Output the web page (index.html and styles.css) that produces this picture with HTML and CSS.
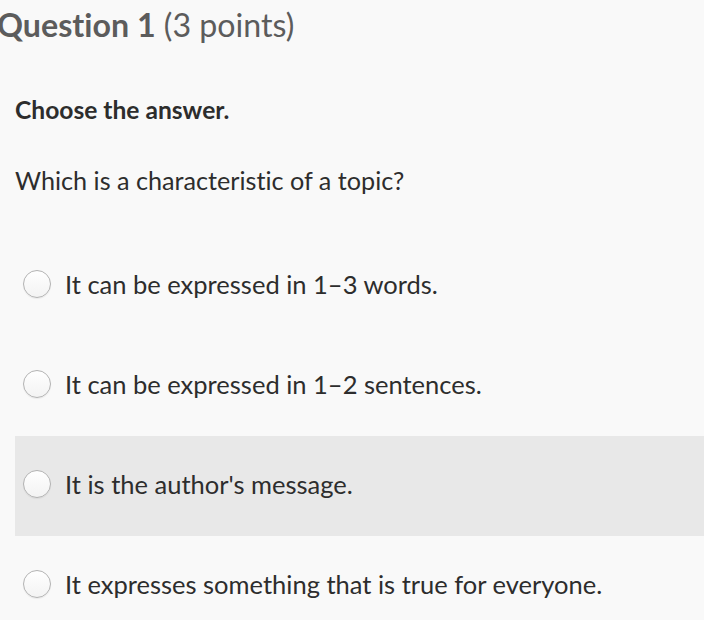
FILE: index.html
```html
<!DOCTYPE html>
<html>
<head>
<meta charset="utf-8">
<link rel="stylesheet" href="styles.css">
</head>
<body>
<div class="page">
  <h1 class="title"><span class="qnum">Question 1</span> (3 points)</h1>
  <p class="instr">Choose the answer.</p>
  <p class="prompt">Which is a characteristic of a topic?</p>
  <ul class="options">
    <li class="option"><span class="radio"></span><span class="label">It can be expressed in 1&#8211;3 words.</span></li>
    <li class="option"><span class="radio"></span><span class="label">It can be expressed in 1&#8211;2 sentences.</span></li>
    <li class="option hover"><span class="radio"></span><span class="label">It is the author's message.</span></li>
    <li class="option"><span class="radio"></span><span class="label">It expresses something that is true for everyone.</span></li>
  </ul>
</div>
</body>
</html>
```
FILE: styles.css
```css
html, body {
  margin: 0;
  padding: 0;
  background: #f9f9f9;
}
.page {
  font-family: Lato, "Open Sans", sans-serif;
  font-variant-ligatures: none;
  color: #2d2d2d;
  padding-left: 15px;
}
.title {
  margin: 0 0 0 -18px;
  padding-top: 3px;
  font-size: 32.2px;
  font-weight: normal;
  line-height: 44px;
  color: #5c5c5c;
}
.qnum {
  font-weight: bold;
}
.instr {
  margin: 48px 0 0 0;
  font-size: 24.6px;
  font-weight: bold;
  line-height: 30px;
}
.prompt {
  margin: 40px 0 0 0;
  font-size: 25.2px;
  line-height: 30px;
}
.options {
  list-style: none;
  margin: 41px 0 0 0;
  padding: 0;
}
.option {
  display: flex;
  align-items: center;
  box-sizing: border-box;
  height: 100px;
  padding: 0 0 4px 8px;
  gap: 14px;
}
.option.hover {
  background: #e8e8e8;
}
.radio {
  width: 26px;
  height: 26px;
  border-radius: 50%;
  border: 1px solid #b3b3b3;
  background: linear-gradient(#ffffff, #f3f3f3);
  box-shadow: 0 1px 1px rgba(0,0,0,0.06);
  flex: none;
}
.label {
  font-size: 25.5px;
  line-height: 30px;
}
```
